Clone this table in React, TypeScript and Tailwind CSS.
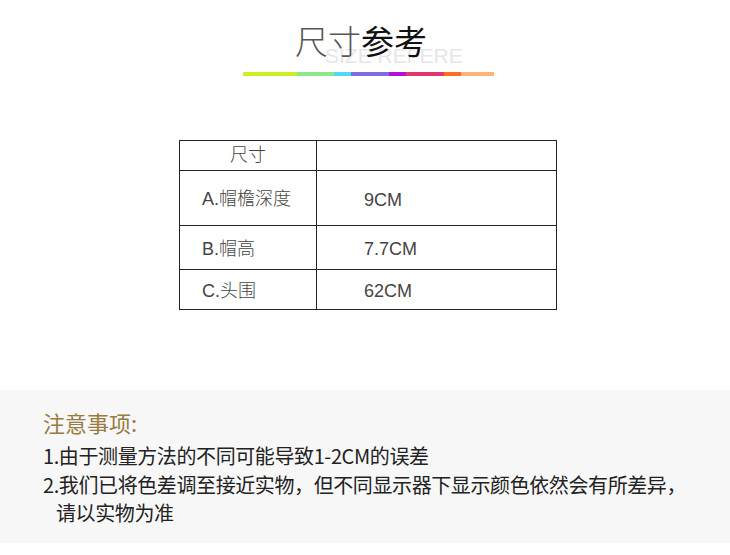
import React from 'react';

const bar = [
  { w: 'w-[54px]', c: 'bg-[#c9f024]' },
  { w: 'w-[37px]', c: 'bg-[#8de88a]' },
  { w: 'w-[17px]', c: 'bg-[#50d9f5]' },
  { w: 'w-[38px]', c: 'bg-[#7f6be0]' },
  { w: 'w-[17px]', c: 'bg-[#b30fd6]' },
  { w: 'w-[38px]', c: 'bg-[#e03770]' },
  { w: 'w-[17px]', c: 'bg-[#ff6e1a]' },
  { w: 'w-[33px]', c: 'bg-[#ffb47a]' },
];

const rows = [
  { label: 'A.帽檐深度', value: '9CM', h: 'h-[55px]' },
  { label: 'B.帽高', value: '7.7CM', h: 'h-[44px]' },
  { label: 'C.头围', value: '62CM', h: 'h-[40px]' },
];

export default function App() {
  return (
    <div className="w-[730px] h-[555px] bg-white overflow-hidden font-['Noto_Sans_CJK_SC',sans-serif]">
      {/* title */}
      <div className="h-[72px] pt-[24px] pl-[295px]">
        <div className="relative w-fit">
          <span className="absolute left-[30px] top-[21px] text-[21px] leading-none font-['Liberation_Sans',sans-serif] text-[#e6e6e6] whitespace-nowrap">
            SIZE REFERE
          </span>
          <h1 className="relative text-[33px] leading-none whitespace-nowrap">
            <span className="font-extralight text-[#555]">尺寸</span>
            <span className="text-[#111]">参考</span>
          </h1>
        </div>
      </div>
      <div className="ml-[243px] flex h-[4px]">
        {bar.map((b, i) => (
          <div key={i} className={`${b.w} ${b.c} h-full`} />
        ))}
      </div>

      {/* size table */}
      <div className="mt-[64px] ml-[179px] w-[378px] border border-[#222] text-[18px] font-light text-[#444] font-['Liberation_Sans','Noto_Sans_CJK_SC',sans-serif]">
        <div className="flex h-[29px]">
          <div className="w-[137px] border-r border-[#222] flex items-center justify-center">尺寸</div>
          <div className="flex-1" />
        </div>
        {rows.map((r) => (
          <div key={r.label} className={`flex border-t border-[#222] ${r.h}`}>
            <div className="w-[137px] border-r border-[#222] flex items-center pl-[22px] pt-[3px]">{r.label}</div>
            <div className="flex-1 flex items-center pl-[47px] pt-[4px]">{r.value}</div>
          </div>
        ))}
      </div>

      {/* notes */}
      <div className="mt-[80px] h-[153px] bg-[#f7f7f7] pl-[43px] pt-[17px]">
        <h2 className="text-[22px] leading-[30px] text-[#9a7b40]">注意事项:</h2>
        <div className="mt-[5px] text-[20px] leading-[28.5px] tracking-[-0.4px] text-[#222]">
          <p>1.由于测量方法的不同可能导致1-2CM的误差</p>
          <p>2.我们已将色差调至接近实物，但不同显示器下显示颜色依然会有所差异，</p>
          <p className="pl-[13px]">请以实物为准</p>
        </div>
      </div>
    </div>
  );
}
